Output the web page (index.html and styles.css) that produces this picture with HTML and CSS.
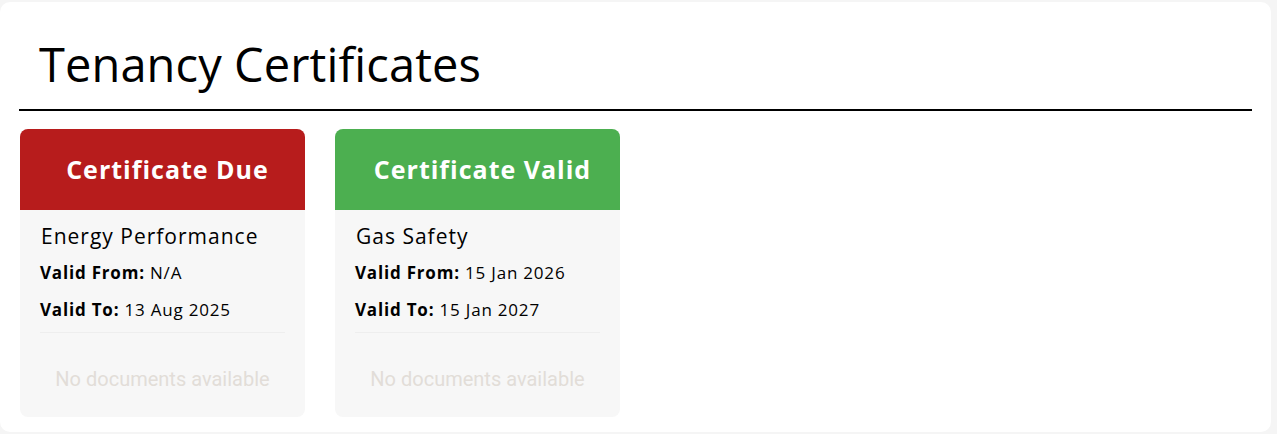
FILE: index.html
```html
<!DOCTYPE html>
<html lang="en">
<head>
<meta charset="utf-8">
<title>Tenancy Certificates</title>
<link rel="stylesheet" href="styles.css">
</head>
<body>
<section class="panel">
  <h1 class="panel-title">Tenancy Certificates</h1>
  <div class="rule"></div>
  <div class="cards">
    <article class="card">
      <header class="card-head due">Certificate Due</header>
      <div class="card-body">
        <div class="cert-name">Energy Performance</div>
        <div class="cert-row"><b>Valid From:</b> N/A</div>
        <div class="cert-row"><b>Valid To:</b> 13 Aug 2025</div>
        <div class="divider"></div>
        <div class="no-docs">No documents available</div>
      </div>
    </article>
    <article class="card">
      <header class="card-head valid">Certificate Valid</header>
      <div class="card-body">
        <div class="cert-name">Gas Safety</div>
        <div class="cert-row"><b>Valid From:</b> 15 Jan 2026</div>
        <div class="cert-row"><b>Valid To:</b> 15 Jan 2027</div>
        <div class="divider"></div>
        <div class="no-docs">No documents available</div>
      </div>
    </article>
  </div>
</section>
</body>
</html>
```
FILE: styles.css
```css
html, body {
  margin: 0;
  padding: 0;
}
body {
  background: #f5f5f5;
  font-family: "Open Sans", "DejaVu Sans", sans-serif;
  color: #000;
  height: 434px;
  overflow: hidden;
}
.panel {
  margin: 2px 6px 0 0;
  background: #fff;
  border-radius: 10px;
  padding: 0 19px 15px 19px;
  height: 430px;
  box-sizing: border-box;
}
.panel-title {
  margin: 0;
  padding: 34px 0 0 20px;
  font-size: 47px;
  font-weight: 400;
  line-height: 56px;
  letter-spacing: 0.1px;
}
.rule {
  height: 2px;
  background: #000;
  margin-top: 17px;
}
.cards {
  display: flex;
  gap: 30px;
  margin: 18px 0 0 1px;
}
.card {
  width: 285px;
  background: #f7f7f7;
  border-radius: 8px;
  overflow: hidden;
}
.card-head {
  height: 81px;
  display: flex;
  align-items: center;
  justify-content: center;
  padding: 0 0 2px 10px;
  box-sizing: border-box;
  color: #fff;
  font-weight: 700;
  font-size: 25px;
  letter-spacing: 1px;
}
.card-head.due { background: #b71c1c; }
.card-head.valid { background: #4caf50; }
.card-body {
  padding: 16px 20px 27px 20px;
}
.cert-name {
  font-size: 21px;
  line-height: 20px;
  letter-spacing: 1px;
  padding-left: 1px;
}
.cert-row {
  font-size: 17px;
  line-height: 20px;
  letter-spacing: 0.8px;
  margin-top: 17px;
}
.cert-row b { font-weight: 700; }
.divider {
  height: 1px;
  background: #eeeeee;
  margin-top: 12px;
}
.no-docs {
  margin-top: 35px;
  text-align: center;
  font-family: Roboto, sans-serif;
  font-size: 20px;
  line-height: 22px;
  color: #e2ddd8;
}
```
